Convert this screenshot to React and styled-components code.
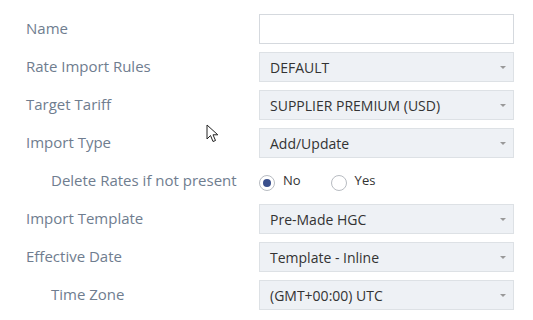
import styled, { createGlobalStyle } from "styled-components";

const GlobalStyle = createGlobalStyle`
  body {
    margin: 0;
    background: #fff;
    font-family: "Open Sans", "Liberation Sans", sans-serif;
  }
`;

const Form = styled.div`
  padding: 14px 0 0 26px;
  display: grid;
  grid-template-columns: 233px 255px;
  grid-auto-rows: 30px;
  row-gap: 8px;
`;

const Label = styled.div`
  display: flex;
  align-items: center;
  padding-left: ${(p) => (p.$indent ? "25px" : "0")};
  color: #6f7d8f;
  font-size: 15px;
  margin-top: -3px;
`;

const TextInput = styled.div`
  box-sizing: border-box;
  border: 1px solid #d5d9de;
  background: #fff;
`;

const Select = styled.div`
  box-sizing: border-box;
  border: 1px solid #dde1e5;
  background: #eef1f5;
  display: flex;
  align-items: center;
  justify-content: space-between;
  padding: 0 7px 0 10px;
  color: #333;
  font-size: 14px;
`;

const Caret = styled.span`
  width: 0;
  height: 0;
  border-left: 3px solid transparent;
  border-right: 3px solid transparent;
  border-top: 3px solid #999;
`;

const RadioGroup = styled.div`
  display: flex;
  align-items: center;
  gap: 30px;
  padding-top: 4px;
`;

const RadioOption = styled.label`
  display: flex;
  align-items: center;
  gap: 8px;
  color: #333;
  font-size: 13px;
`;

const RadioCircle = styled.span`
  box-sizing: border-box;
  width: 16px;
  height: 16px;
  border-radius: 50%;
  border: 1px solid #b8bcc2;
  background: #fff;
  display: flex;
  align-items: center;
  justify-content: center;
  &::after {
    content: "";
    width: 8px;
    height: 8px;
    border-radius: 50%;
    background: ${(p) => (p.$checked ? "#3a4f8c" : "transparent")};
  }
`;

const RadioText = styled.span`
  margin-top: -7px;
`;

const Cursor = styled.svg`
  position: absolute;
  left: 206px;
  top: 124px;
`;

function Dropdown({ value }) {
  return (
    <Select>
      <span>{value}</span>
      <Caret />
    </Select>
  );
}

export default function App() {
  return (
    <>
      <GlobalStyle />
      <Form>
        <Label>Name</Label>
        <TextInput />
        <Label>Rate Import Rules</Label>
        <Dropdown value="DEFAULT" />
        <Label>Target Tariff</Label>
        <Dropdown value="SUPPLIER PREMIUM (USD)" />
        <Label>Import Type</Label>
        <Dropdown value="Add/Update" />
        <Label $indent>Delete Rates if not present</Label>
        <RadioGroup>
          <RadioOption>
            <RadioCircle $checked />
            <RadioText>No</RadioText>
          </RadioOption>
          <RadioOption>
            <RadioCircle />
            <RadioText>Yes</RadioText>
          </RadioOption>
        </RadioGroup>
        <Label>Import Template</Label>
        <Dropdown value="Pre-Made HGC" />
        <Label>Effective Date</Label>
        <Dropdown value="Template - Inline" />
        <Label $indent>Time Zone</Label>
        <Dropdown value="(GMT+00:00) UTC" />
      </Form>
      <Cursor width="13" height="20" viewBox="0 0 13 20">
        <path
          d="M1 1 L1 15 L4.5 11.5 L7 17.5 L9.5 16.5 L7 10.8 L11.8 10.8 Z"
          fill="#fff"
          stroke="#222"
          strokeWidth="1"
          strokeLinejoin="miter"
        />
      </Cursor>
    </>
  );
}
